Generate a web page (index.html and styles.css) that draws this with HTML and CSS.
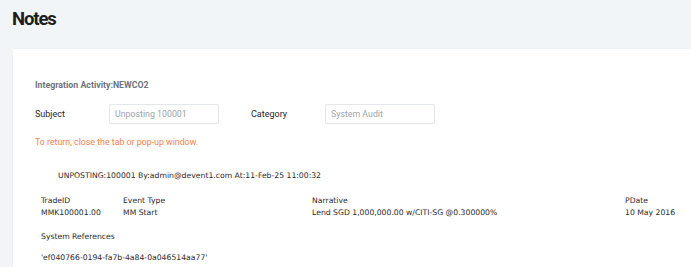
FILE: index.html
```html
<!DOCTYPE html>
<html>
<head>
<meta charset="utf-8">
<link rel="stylesheet" href="styles.css">
</head>
<body>
<div class="page">
  <h1 class="title">Notes</h1>
  <div class="card">
    <div class="activity">Integration Activity:NEWCO2</div>
    <div class="fields">
      <div class="field">
        <span class="label">Subject</span>
        <div class="input">Unposting 100001</div>
      </div>
      <div class="field">
        <span class="label">Category</span>
        <div class="input">System Audit</div>
      </div>
    </div>
    <div class="warn">To return, close the tab or pop-up window.</div>
    <div class="note">
      <div class="note-head">UNPOSTING:100001 By:admin@devent1.com At:11-Feb-25 11:00:32</div>
      <div class="grid">
        <div>TradeID</div><div>Event Type</div><div>Narrative</div><div>PDate</div>
        <div>MMK100001.00</div><div>MM Start</div><div>Lend SGD 1,000,000.00 w/CITI-SG @0.300000%</div><div>10 May 2016</div>
      </div>
      <div class="refs">System References</div>
      <div class="uuid">'ef040766-0194-fa7b-4a84-0a046514aa77'</div>
    </div>
  </div>
</div>
</body>
</html>
```
FILE: styles.css
```css
html, body { margin: 0; padding: 0; }
body {
  background: #f2f5f8;
  font-family: Roboto, "Noto Sans", sans-serif;
  width: 691px;
  height: 267px;
  overflow: hidden;
}
.page { padding: 8px 0 0 13px; }
.title {
  margin: 0 0 0 -1px;
  font-size: 18.5px;
  font-weight: 700;
  color: #1a1d21;
  line-height: 22px;
  letter-spacing: -1.1px;
}
.card {
  margin-top: 19px;
  background: #fff;
  box-shadow: 0 0 2px rgba(0,0,0,0.06);
  border-radius: 2px 0 0 0;
  padding: 30px 0 0 22px;
  height: 188px;
  overflow: hidden;
}
.activity {
  font-size: 8.8px;
  font-weight: 700;
  color: #70757d;
  line-height: 12px;
}
.fields {
  display: flex;
  gap: 32px;
  margin-top: 13px;
  align-items: center;
}
.field { display: flex; align-items: center; }
.label {
  width: 74px;
  font-size: 9px;
  color: #1f2328;
}
.input {
  width: 103px;
  height: 18px;
  border: 1px solid #e3e6ea;
  border-radius: 2px;
  font-size: 8.8px;
  color: #a0a5ab;
  line-height: 18px;
  padding-left: 5px;
}
.warn {
  margin-top: 12px;
  font-size: 8.8px;
  color: #f7804c;
  line-height: 12px;
}
.note {
  font-family: "DejaVu Sans", Verdana, sans-serif;
  font-size: 7.7px;
  color: #2a2a2a;
  margin-left: 6px;
  margin-top: 23px;
}
.note-head { margin-left: 17px; line-height: 10px; }
.grid {
  margin-top: 14px;
  display: grid;
  grid-template-columns: 82px 189px 313px auto;
  line-height: 12px;
}
.refs { margin-top: 12px; line-height: 12px; }
.uuid { margin-top: 9px; line-height: 12px; }
```
